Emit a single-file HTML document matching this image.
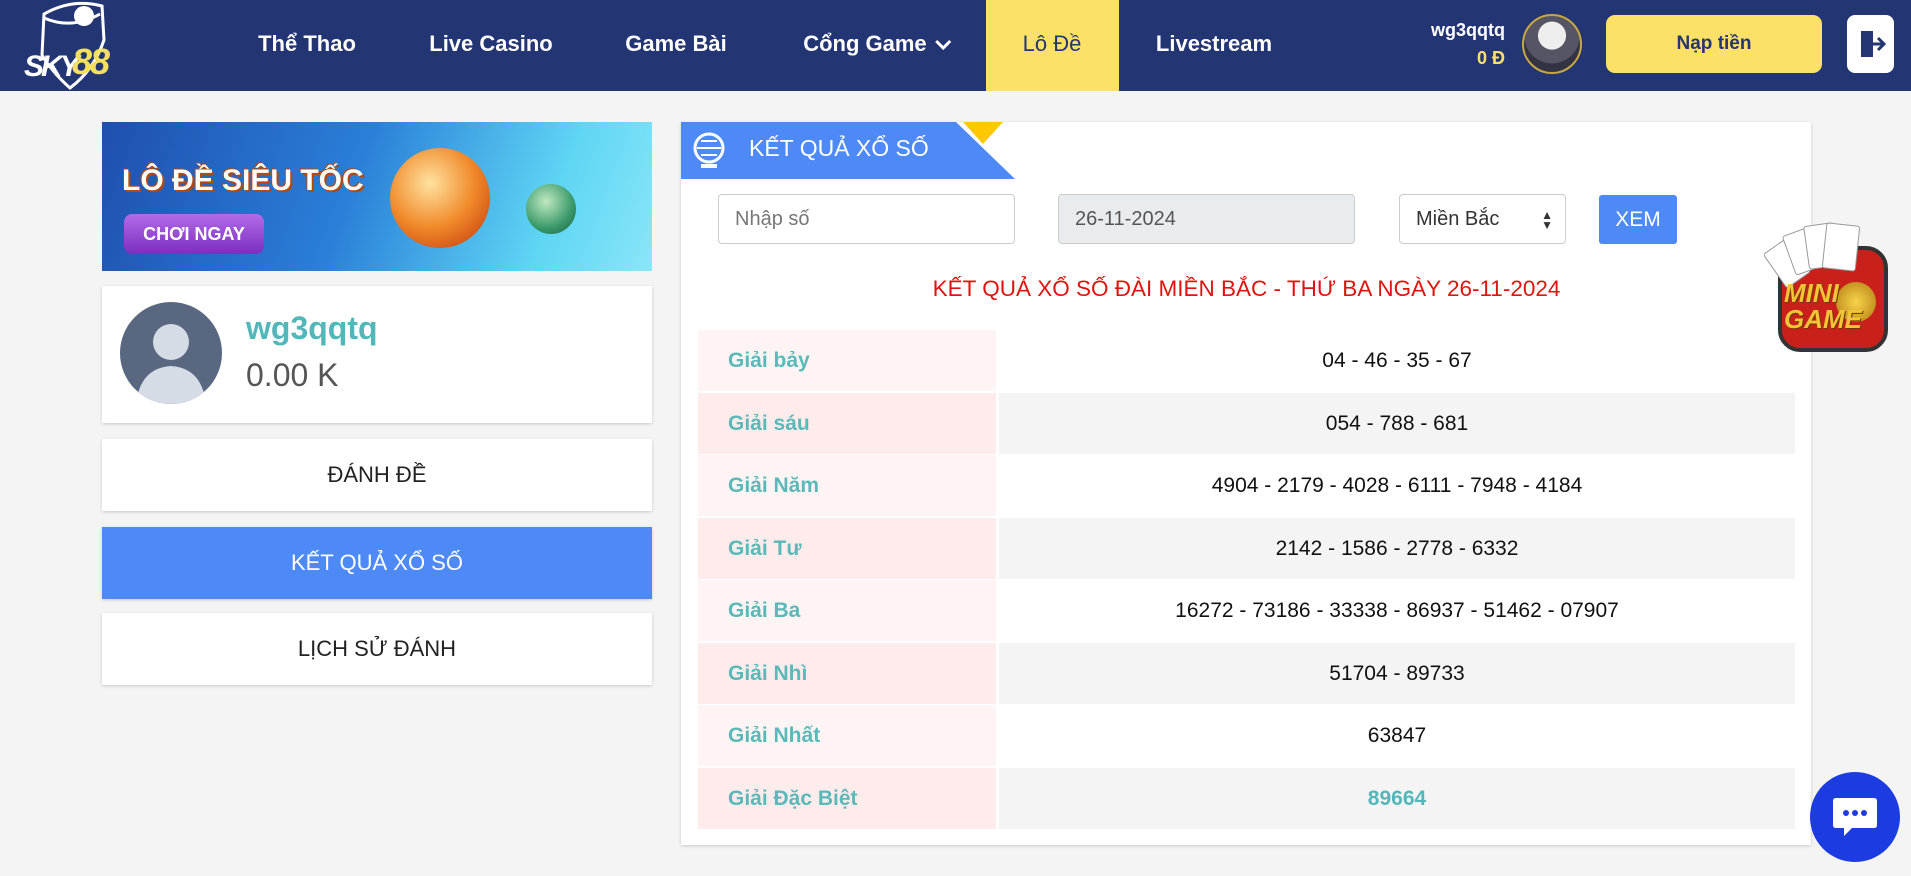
<!DOCTYPE html>
<html><head><meta charset="utf-8"><style>
*{margin:0;padding:0;box-sizing:border-box}
body{width:1911px;height:876px;overflow:hidden;background:#f4f4f4;font-family:"Liberation Sans",sans-serif;position:relative}
.abs{position:absolute}
.hdr{left:0;top:0;width:1911px;height:91px;background:#243574}
.nav{top:0;height:91px;line-height:87px;color:#fff;font-weight:bold;font-size:22px;transform:translateX(-50%);white-space:nowrap}
.card{background:#fff;box-shadow:0 1px 3px rgba(0,0,0,.18)}
.btn{left:102px;width:550px;height:72px;line-height:72px;text-align:center;font-size:22px;color:#222}
.inp{height:50px;border:1px solid #ccc;border-radius:4px;font-size:20px;line-height:48px;padding-left:16px;color:#777}
.row{left:698px;width:1097px;height:62.5px}
.lab{position:absolute;left:0;top:0;width:298px;height:61px;color:#5ab9b9;font-weight:bold;font-size:21px;line-height:61px;padding-left:30px}
.val{position:absolute;left:301px;top:0;width:796px;height:61px;text-align:center;font-size:21px;line-height:61px;color:#111}
</style></head><body>
<div class="abs hdr"></div>
<!-- logo -->
<svg class="abs" style="left:22px;top:0" width="110" height="91" viewBox="0 0 110 91">
<path d="M22 14 Q50 -2 80 6 L82 40 Q72 70 48 88 Q30 72 20 55 Z" fill="none" stroke="#fff" stroke-width="3"/>
<path d="M22 18 Q50 30 78 14" fill="none" stroke="#fff" stroke-width="3"/>
<circle cx="62" cy="16" r="10" fill="#fff"/>
<text x="2" y="76" fill="#fff" font-size="30" font-weight="bold" font-family="Liberation Sans" font-style="italic" letter-spacing="-3">SKY</text>
<text x="50" y="74" fill="#f4e05a" font-size="36" font-weight="bold" font-family="Liberation Sans" font-style="italic" letter-spacing="-2">88</text>
</svg>
<div class="abs nav" style="left:307px">Thể Thao</div>
<div class="abs nav" style="left:491px">Live Casino</div>
<div class="abs nav" style="left:676px">Game Bài</div>
<div class="abs nav" style="left:878px">Cổng Game <svg width="20" height="14" viewBox="0 0 20 14" style="vertical-align:middle"><path d="M3 3 L10 10 L17 3" stroke="#fff" stroke-width="3" fill="none"/></svg></div>
<div class="abs" style="left:986px;top:0;width:133px;height:91px;background:#fde068"></div>
<div class="abs nav" style="left:1052px;color:#243574;font-weight:normal">Lô Đề</div>
<div class="abs nav" style="left:1214px">Livestream</div>
<div class="abs" style="right:406px;top:20px;color:#fff;font-weight:bold;font-size:18px">wg3qqtq</div>
<div class="abs" style="right:406px;top:48px;color:#fde068;font-weight:bold;font-size:18px">0 Đ</div>
<div class="abs" style="left:1522px;top:14px;width:60px;height:60px;border-radius:50%;background:radial-gradient(circle at 50% 35%,#eee 0 30%,#556 31% 60%,#334 61%);border:2px solid #c9a840"></div>
<div class="abs" style="left:1606px;top:15px;width:216px;height:58px;background:#fde068;border-radius:9px;text-align:center;line-height:58px;font-size:19px;font-weight:bold;color:#243574">Nạp tiền</div>
<div class="abs" style="left:1847px;top:15px;width:47px;height:58px;background:#fff;border-radius:8px"><svg width="47" height="58" viewBox="0 0 47 58"><path d="M14 16 H26 V42 H14 Z" fill="#243574"/><path d="M24 29 H36 M31 23 L37 29 L31 35" stroke="#243574" stroke-width="3" fill="none"/></svg></div>

<!-- banner -->
<div class="abs" style="left:102px;top:122px;width:550px;height:149px;background:linear-gradient(110deg,#1f4fb0 0%,#2a7fd8 45%,#5fd6f4 80%,#8ae6f8 100%);overflow:hidden">
<div class="abs" style="left:20px;top:42px;color:#fff;font-weight:bold;font-size:30px;text-shadow:2px 2px 0 #b04a10,-1px -1px 0 #b04a10">LÔ ĐỀ SIÊU TỐC</div>
<div class="abs" style="left:22px;top:92px;width:140px;height:40px;border-radius:8px;background:linear-gradient(#b36be8,#7a2fc0);color:#fff;font-weight:bold;font-size:18px;line-height:40px;text-align:center">CHƠI NGAY</div>
<div class="abs" style="left:288px;top:26px;width:100px;height:100px;border-radius:50%;background:radial-gradient(circle at 40% 35%,#ffe2a0,#f08a2a 50%,#c0300a)"></div>
<div class="abs" style="left:424px;top:62px;width:50px;height:50px;border-radius:50%;background:radial-gradient(circle at 40% 35%,#bfe8c0,#3a9a6a 60%,#1d5a40)"></div>
</div>
<!-- profile -->
<div class="abs card" style="left:102px;top:286px;width:550px;height:137px"></div>
<div class="abs" style="left:120px;top:302px;width:102px;height:102px;border-radius:50%;background:#596781;overflow:hidden"><svg width="102" height="102"><circle cx="51" cy="40" r="18" fill="#d6dce6"/><path d="M16 102 Q20 66 51 64 Q82 66 86 102Z" fill="#d6dce6"/></svg></div>
<div class="abs" style="left:246px;top:310px;color:#52b7b8;font-weight:bold;font-size:32px">wg3qqtq</div>
<div class="abs" style="left:246px;top:357px;color:#555;font-size:32px">0.00 K</div>
<div class="abs card btn" style="top:439px">ĐÁNH ĐỀ</div>
<div class="abs btn" style="top:527px;background:#4d8af7;color:#fff;box-shadow:0 1px 3px rgba(0,0,0,.18)">KẾT QUẢ XỔ SỐ</div>
<div class="abs card btn" style="top:613px">LỊCH SỬ ĐÁNH</div>

<!-- right panel -->
<div class="abs card" style="left:681px;top:122px;width:1130px;height:723px"></div>
<svg class="abs" style="left:681px;top:122px" width="340" height="58"><path d="M0 0 H275 L334 57 H0Z" fill="#4d8af7"/><path d="M282 0 H322 L302 22Z" fill="#fdc800"/>
<circle cx="28" cy="26" r="14" fill="none" stroke="#fff" stroke-width="3"/><path d="M16 26 H40 M20 19 H36 M20 33 H36" stroke="#fff" stroke-width="2"/><path d="M20 44 H36" stroke="#fff" stroke-width="4"/></svg>
<div class="abs" style="left:749px;top:135px;color:#fff;font-size:23px">KẾT QUẢ XỔ SỐ</div>
<div class="abs inp" style="left:718px;top:194px;width:297px">Nhập số</div>
<div class="abs inp" style="left:1058px;top:194px;width:297px;background:#e9ecef;color:#555">26-11-2024</div>
<div class="abs inp" style="left:1399px;top:194px;width:167px;color:#333">Miền Bắc<span style="position:absolute;right:12px;top:0;font-size:12px;line-height:10px;padding-top:15px">▲<br>▼</span></div>
<div class="abs" style="left:1599px;top:195px;width:78px;height:49px;background:#4d8af7;border-radius:3px;color:#fff;font-size:21px;line-height:49px;text-align:center">XEM</div>
<div class="abs" style="left:698px;top:276px;width:1097px;text-align:center;color:#e0140e;font-size:22.5px">KẾT QUẢ XỔ SỐ ĐÀI MIỀN BẮC - THỨ BA NGÀY 26-11-2024</div>

<div class="abs row" style="top:330px"><div class="lab" style="background:#fdf4f3">Giải bảy</div><div class="val">04 - 46 - 35 - 67</div></div>
<div class="abs row" style="top:392.5px"><div class="lab" style="background:#fdeceb">Giải sáu</div><div class="val" style="background:#f4f4f4">054 - 788 - 681</div></div>
<div class="abs row" style="top:455px"><div class="lab" style="background:#fdf4f3">Giải Năm</div><div class="val">4904 - 2179 - 4028 - 6111 - 7948 - 4184</div></div>
<div class="abs row" style="top:517.5px"><div class="lab" style="background:#fdeceb">Giải Tư</div><div class="val" style="background:#f4f4f4">2142 - 1586 - 2778 - 6332</div></div>
<div class="abs row" style="top:580px"><div class="lab" style="background:#fdf4f3">Giải Ba</div><div class="val">16272 - 73186 - 33338 - 86937 - 51462 - 07907</div></div>
<div class="abs row" style="top:642.5px"><div class="lab" style="background:#fdeceb">Giải Nhì</div><div class="val" style="background:#f4f4f4">51704 - 89733</div></div>
<div class="abs row" style="top:705px"><div class="lab" style="background:#fdf4f3">Giải Nhất</div><div class="val">63847</div></div>
<div class="abs row" style="top:767.5px"><div class="lab" style="background:#fdeceb">Giải Đặc Biệt</div><div class="val" style="background:#f4f4f4;color:#52b7b8;font-weight:bold">89664</div></div>

<!-- mini game -->
<div class="abs" style="left:1768px;top:224px;width:124px;height:130px">
<div class="abs" style="left:10px;top:22px;width:110px;height:106px;border-radius:22px;background:#c9201c;border:4px solid #333"></div>
<div class="abs" style="left:4px;top:18px;width:30px;height:42px;background:#fff;transform:rotate(-35deg);border:1px solid #999;border-radius:3px"></div>
<div class="abs" style="left:20px;top:6px;width:30px;height:42px;background:#fff;transform:rotate(-20deg);border:1px solid #999;border-radius:3px"></div>
<div class="abs" style="left:38px;top:0;width:30px;height:44px;background:#fff;transform:rotate(-8deg);border:1px solid #999;border-radius:3px"></div>
<div class="abs" style="left:56px;top:0;width:34px;height:46px;background:#fff;transform:rotate(6deg);border:1px solid #999;border-radius:3px"></div>
<div class="abs" style="left:68px;top:58px;width:40px;height:40px;border-radius:50%;background:radial-gradient(#f7d34a,#b07a10)"></div>
<div class="abs" style="left:16px;top:56px;color:#f3c437;font-weight:bold;font-size:26px;line-height:26px;font-style:italic;text-shadow:1px 1px 0 #6b3a00">MINI<br>GAME</div>
</div>
<!-- chat -->
<div class="abs" style="left:1810px;top:772px;width:90px;height:90px;border-radius:50%;background:#1c3be0"></div>
<svg class="abs" style="left:1830px;top:792px" width="50" height="50"><path d="M6 6 H44 Q47 6 47 9 V33 Q47 36 44 36 H22 L14 44 V36 H6 Q3 36 3 33 V9 Q3 6 6 6Z" fill="#fff"/><circle cx="16" cy="21" r="3" fill="#1c3be0"/><circle cx="25" cy="21" r="3" fill="#1c3be0"/><circle cx="34" cy="21" r="3" fill="#1c3be0"/></svg>
</body></html>
